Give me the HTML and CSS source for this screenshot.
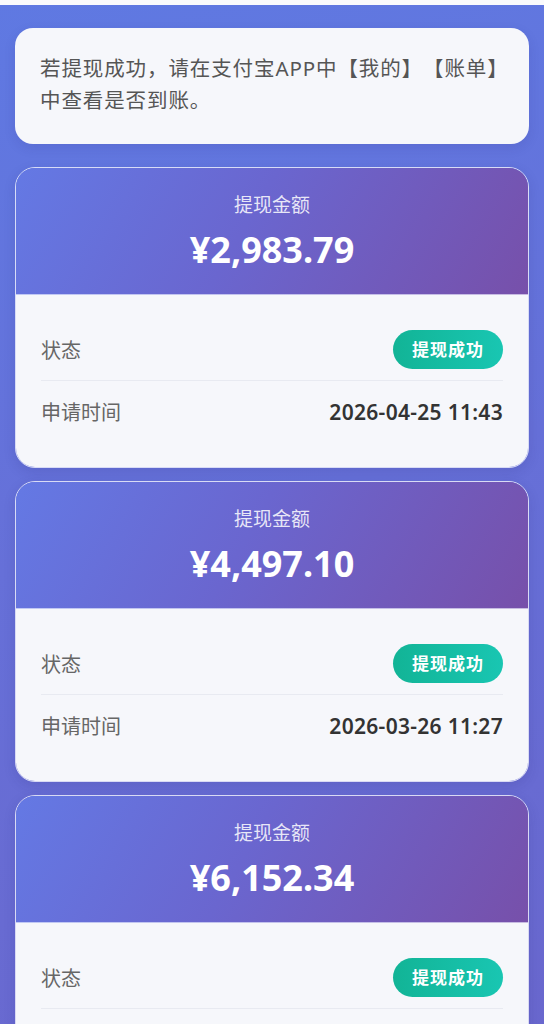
FILE: index.html
```html
<!DOCTYPE html>
<html lang="zh-CN">
<head>
  <meta charset="UTF-8" />
  <meta name="viewport" content="width=device-width, initial-scale=1.0"/>
  <title>提现记录</title>
  <link rel="stylesheet" href="styles.css">
</head>
<body>
  <div class="topbar"></div>

  <div class="page">
    <div class="notice">
      若提现成功，请在支付宝APP中【我的】【账单】<br>中查看是否到账。
    </div>

    <div class="record">
      <div class="record-head">
        <div class="head-label">提现金额</div>
        <div class="amount">¥2,983.79</div>
      </div>
      <div class="record-body">
        <div class="row">
          <span class="row-label">状态</span>
          <span class="badge">提现成功</span>
        </div>
        <div class="row">
          <span class="row-label">申请时间</span>
          <span class="row-value">2026-04-25 11:43</span>
        </div>
      </div>
    </div>

    <div class="record">
      <div class="record-head">
        <div class="head-label">提现金额</div>
        <div class="amount">¥4,497.10</div>
      </div>
      <div class="record-body">
        <div class="row">
          <span class="row-label">状态</span>
          <span class="badge">提现成功</span>
        </div>
        <div class="row">
          <span class="row-label">申请时间</span>
          <span class="row-value">2026-03-26 11:27</span>
        </div>
      </div>
    </div>

    <div class="record">
      <div class="record-head">
        <div class="head-label">提现金额</div>
        <div class="amount">¥6,152.34</div>
      </div>
      <div class="record-body">
        <div class="row">
          <span class="row-label">状态</span>
          <span class="badge">提现成功</span>
        </div>
        <div class="row">
          <span class="row-label">申请时间</span>
          <span class="row-value">2026-02-21 09:15</span>
        </div>
      </div>
    </div>
  </div>
</body>
</html>
```

FILE: styles.css
```css
body {
  font-family: "Noto Sans", "Noto Sans CJK SC", sans-serif;
  margin: 0;
  padding: 0;
  background: linear-gradient(165deg, #5f79e2 0%, #6670d8 45%, #6a66cc 100%);
  color: #333;
  min-height: 1024px;
}
.topbar {
  height: 5px;
  background: #fafafc;
}
.page {
  padding: 23px 15px 20px;
}
.notice {
  background: #f6f7fb;
  border-radius: 18px;
  padding: 24px 5px 28px 25px;
  font-size: 20.5px;
  line-height: 32px;
  letter-spacing: 0.9px;
  color: #555;
  margin-bottom: 23px;
  text-spacing-trim: space-all;
  white-space: nowrap;
  box-shadow: 0 4px 12px rgba(40, 40, 120, 0.12);
}
.record {
  border: 1.5px solid rgba(255, 255, 255, 0.75);
  border-radius: 20px;
  overflow: hidden;
  margin-bottom: 13px;
  box-shadow: 0 4px 12px rgba(40, 40, 120, 0.15);
}
.record-head {
  background: linear-gradient(120deg, #6479e4 0%, #6a66cf 45%, #7750aa 100%);
  text-align: center;
  padding: 24px 0 22px;
  color: #fff;
  border-bottom: 1px solid rgba(255, 255, 255, 0.6);
}
.head-label {
  font-size: 19px;
  line-height: 26px;
  color: rgba(255, 255, 255, 0.85);
}
.amount {
  font-size: 36px;
  line-height: 44px;
  font-weight: bold;
  margin-top: 10px;
}
.record-body {
  background: #f6f7fb;
  padding: 24px 25px 25px;
}
.row {
  display: flex;
  justify-content: space-between;
  align-items: center;
  height: 61px;
}
.row + .row {
  border-top: 1px solid #e8eaf1;
}
.row-label {
  font-size: 20px;
  color: #666;
}
.row-value {
  font-size: 21px;
  font-weight: 600;
  letter-spacing: 0.3px;
  color: #333;
}
.badge {
  background: linear-gradient(90deg, #12b496, #19c6b2);
  color: #fff;
  font-size: 17px;
  font-weight: bold;
  line-height: 39px;
  padding: 0 19px;
  border-radius: 20px;
  letter-spacing: 1px;
}
```
